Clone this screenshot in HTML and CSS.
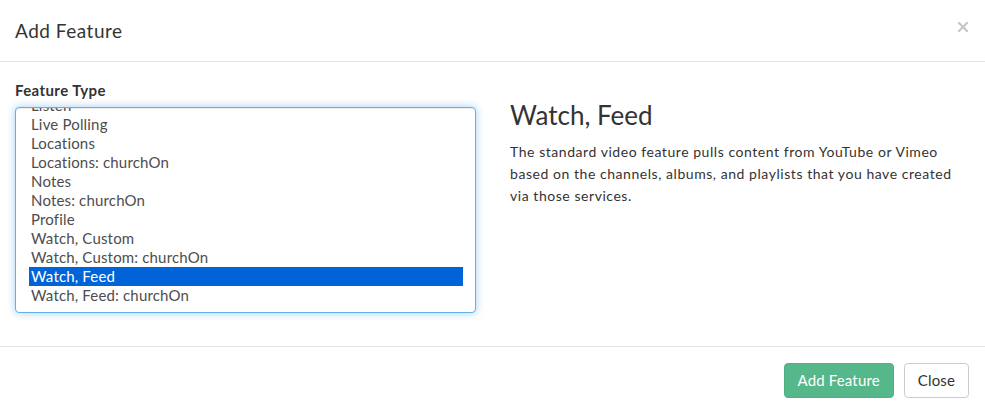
FILE: index.html
```html
<!DOCTYPE html>
<html lang="en">
<head>
<meta charset="UTF-8">
<meta name="viewport" content="width=device-width, initial-scale=1.0">
<title>Add Feature</title>
<link rel="stylesheet" href="styles.css">
</head>
<body>
<div class="modal">
  <div class="modal-header">
    <h4 class="modal-title">Add Feature</h4>
    <button class="close" type="button" aria-label="Close">
      <svg width="10" height="10" viewBox="0 0 10 10"><path d="M1 1 L9 9 M9 1 L1 9" stroke="#c6c6c6" stroke-width="2.2" stroke-linecap="square"/></svg>
    </button>
  </div>

  <div class="modal-body">
    <div class="col">
      <label class="field-label">Feature Type</label>
      <div class="listbox">
        <ul class="options">
          <li>Listen</li>
          <li>Live Polling</li>
          <li>Locations</li>
          <li>Locations: churchOn</li>
          <li>Notes</li>
          <li>Notes: churchOn</li>
          <li>Profile</li>
          <li>Watch, Custom</li>
          <li>Watch, Custom: churchOn</li>
          <li class="selected">Watch, Feed</li>
          <li>Watch, Feed: churchOn</li>
        </ul>
      </div>
    </div>
    <div class="col">
      <h3 class="feature-name">Watch, Feed</h3>
      <p class="feature-desc">The standard video feature pulls content from YouTube or Vimeo based on the channels, albums, and playlists that you have created via those services.</p>
    </div>
  </div>

  <div class="modal-footer">
    <button class="btn btn-primary" type="button">Add Feature</button>
    <button class="btn btn-default" type="button">Close</button>
  </div>
</div>
</body>
</html>
```

FILE: styles.css
```css
body {
  font-family: Lato, "Open Sans", Arial, sans-serif;
  font-size: 14px;
  color: #333;
  background-color: #fff;
  margin: 0;
  padding: 0;
  overflow: hidden;
}

.modal {
  background-color: #fff;
}

.modal-header {
  display: flex;
  align-items: center;
  justify-content: space-between;
  padding: 16px 15px 15px;
  border-bottom: 1px solid #e5e5e5;
}

.modal-title {
  margin: 0;
  font-size: 19px;
  letter-spacing: 0.5px;
  font-weight: normal;
  line-height: 30px;
  color: #333;
}

.close {
  background: none;
  border: none;
  padding: 0;
  margin: 0 2px 8px 0;
  cursor: pointer;
  display: flex;
}

.modal-body {
  display: flex;
  padding: 18px 0 33px;
}

.col {
  flex: 0 0 50%;
  box-sizing: border-box;
  padding: 0 15px;
  min-width: 0;
}

.col + .col {
  padding-left: 17.5px;
  padding-right: 28px;
}

.field-label {
  display: block;
  font-weight: bold;
  font-size: 15px;
  letter-spacing: 0.4px;
  line-height: 20px;
  margin-bottom: 7px;
  color: #333;
}

.listbox {
  height: 206px;
  width: 461px;
  box-sizing: border-box;
  border: 1px solid #66afe9;
  border-radius: 4px;
  box-shadow: inset 0 1px 1px rgba(0, 0, 0, 0.075), 0 0 8px rgba(102, 175, 233, 0.6);
  overflow: hidden;
  padding: 0 12px 0 13px;
  background-color: #fff;
}

.options {
  list-style: none;
  margin: -11.7px 0 0;
  padding: 0;
}

.options li {
  font-size: 15px;
  letter-spacing: 0.17px;
  line-height: 19px;
  padding: 0 2px;
  color: #4d4d4d;
  white-space: nowrap;
}

.options li.selected {
  background-color: #0064d8;
  color: #fff;
}

.feature-name {
  font-size: 26px;
  font-weight: normal;
  line-height: 1.1;
  margin: 20.6px 0 11.4px;
  color: #333;
}

.feature-desc {
  margin: 0;
  font-size: 14px;
  letter-spacing: 0.55px;
  line-height: 22px;
  color: #333;
}

.modal-footer {
  display: flex;
  justify-content: flex-end;
  gap: 10px;
  padding: 16px 16px 15px;
  border-top: 1px solid #e5e5e5;
}

.btn {
  font-family: Lato, "Open Sans", Arial, sans-serif;
  font-size: 15px;
  letter-spacing: 0.15px;
  line-height: 21px;
  padding: 6px 13px;
  border: 1px solid transparent;
  border-radius: 4px;
  cursor: pointer;
}

.btn-primary {
  background-color: #55b78a;
  border-color: #4fb083;
  color: #fff;
}

.btn-default {
  background-color: #fff;
  border-color: #ccc;
  color: #333;
}
```
